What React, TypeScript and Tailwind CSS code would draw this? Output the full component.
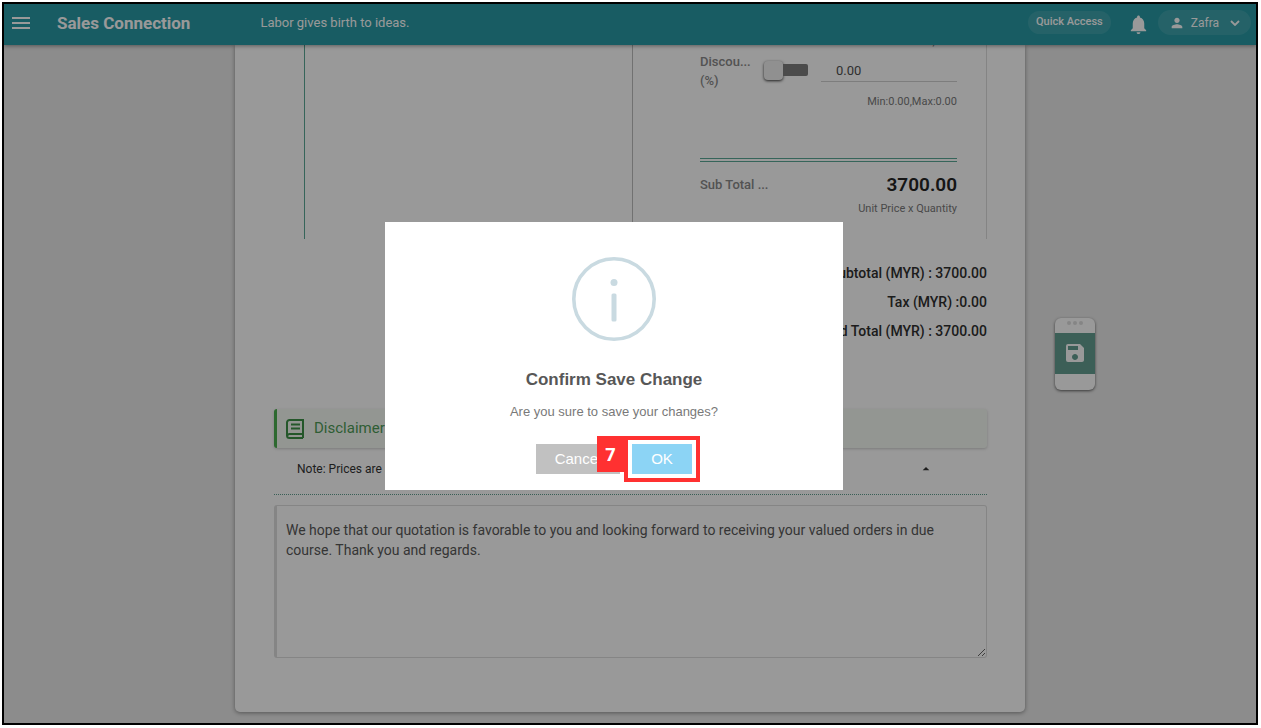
import { MdMenu, MdNotifications, MdPerson, MdSave, MdArrowDropUp } from "react-icons/md";

function Header() {
  return (
    <header className="relative z-10 flex h-[41px] shrink-0 items-center bg-[#289aa5] pr-[5px] pb-1 text-white shadow-[0_1px_4px_rgba(0,0,0,0.4)]">
      <button type="button" aria-label="Open menu" className="ml-[5px]">
        <MdMenu className="size-6" />
      </button>
      <h1 className="ml-6 text-[17px] leading-6 font-bold">Sales Connection</h1>
      <p className="ml-[70px] text-[13px] leading-5">Labor gives birth to ideas.</p>
      <div className="ml-auto flex items-center">
        <button type="button" className="h-[23px] rounded-full bg-white/10 px-2 text-[11px] font-medium">
          Quick Access
        </button>
        <button type="button" aria-label="Notifications" className="mt-[3px] mr-2 ml-4">
          <MdNotifications className="size-[23px]" />
        </button>
        <button type="button" className="flex h-[25px] items-center rounded-full bg-white/10 px-[11px] text-[12px]">
          <MdPerson className="size-4" />
          <span className="ml-[6px]">Zafra</span>
          <svg viewBox="0 0 10 6" className="ml-[11px] w-[10px] fill-none stroke-white stroke-[1.8]" aria-hidden="true">
            <path d="M1 1l4 4 4-4" />
          </svg>
        </button>
      </div>
    </header>
  );
}

function LineItem() {
  return (
    <section className="ml-[30px] grid h-[194px] grid-cols-[327px_1fr] overflow-hidden border-r border-l border-r-[#dcdcdc] border-l-[#5aa896]">
      <div />
      <div className="border-l border-[#bdbdbd] pr-[29px] pl-[67px]">
        <p className="-mt-[10px] text-right text-[11px] leading-[14px] text-[#7a7a7a]">Price, Unit</p>
        <div className="mt-[3px] flex">
          <label htmlFor="discount" className="w-[52px] text-[13px] leading-[19px] font-medium text-[#8a8a8a]">
            <span className="block whitespace-nowrap">Discou...</span>
            (%)
          </label>
          <button
            type="button"
            role="switch"
            aria-checked="false"
            aria-label="Discount"
            className="mt-[8px] ml-3 flex h-[20px] w-[44px] items-center"
          >
            <span className="size-[19px] shrink-0 rounded-[4px] bg-[#f1f1f1] shadow-[0_1px_3px_rgba(0,0,0,0.8)]" />
            <span className="h-3 flex-1 rounded-r-[2px] bg-[#7d7d7d]" />
          </button>
          <input
            id="discount"
            defaultValue="0.00"
            className="mt-2 ml-[13px] h-[22px] w-0 flex-1 border-b border-[#d0d0d0] pl-[15px] text-[13px] text-[#505050]"
          />
        </div>
        <p className="mt-1 text-right text-[11px] leading-4 text-[#7a7a7a]">Min:0.00,Max:0.00</p>
        <div className="mt-12 h-1 border-y border-[#5aa896]" />
        <div className="mt-[11px] flex items-center justify-between">
          <span className="text-[13px] font-medium text-[#8a8a8a]">Sub Total ...</span>
          <strong className="text-[19px] leading-6 font-semibold text-[#262626]">3700.00</strong>
        </div>
        <p className="mt-1 text-right text-[11px] leading-4 text-[#7a7a7a]">Unit Price x Quantity</p>
      </div>
    </section>
  );
}

function Totals() {
  return (
    <div className="mt-5 text-right text-[14px] leading-[29px] font-medium text-[#303030]">
      <p>Subtotal (MYR) : 3700.00</p>
      <p>Tax (MYR) :0.00</p>
      <p>Grand Total (MYR) : 3700.00</p>
    </div>
  );
}

function Disclaimer() {
  return (
    <section className="mt-[63px]">
      <h2 className="flex h-[39px] items-center rounded-[3px] border-l-[3px] border-[#4caf50] bg-[#f6faf4] pl-[9px] text-[15px] text-[#4f9d58] shadow-[0_1px_3px_rgba(0,0,0,0.2)]">
        <svg viewBox="0 0 18 20" className="w-[18px] fill-none stroke-[#3c9146] stroke-2" aria-hidden="true">
          <path d="M17 19H3.500A2.500 2.500 0 0 1 1 16.500V3.500A2.500 2.500 0 0 1 3.500 1H17V19M17 15H3.500A2 2 0 0 0 1.500 16.500M5 5.500h9M5 9.500h9" />
        </svg>
        <span className="ml-[10px]">Disclaimer</span>
      </h2>
      <button
        type="button"
        className="flex h-[47px] w-full items-center justify-between border-b border-dotted border-[#5f9e90] pr-[53px] pb-1 pl-[23px] text-[12px] text-[#333]"
      >
        <span>Note: Prices are subject to change</span>
        <MdArrowDropUp className="size-4" />
      </button>
      <textarea
        aria-label="Disclaimer text"
        className="mt-[10px] block h-[153px] w-full rounded-[3px] border border-l-[3px] border-[#dedede] bg-white px-[9px] py-[14px] text-[14px] leading-5 text-[#595959]"
        defaultValue="We hope that our quotation is favorable to you and looking forward to receiving your valued orders in due course. Thank you and regards."
      />
    </section>
  );
}

function SavePanel() {
  return (
    <aside className="absolute top-[314px] left-1/2 ml-[425px] w-10 overflow-hidden rounded-[6px] bg-white shadow-[0_1px_3px_rgba(0,0,0,0.6)]">
      <div className="flex h-[15px] justify-center gap-[2px] pt-[3px]">
        <i className="size-1 rounded-full bg-[#dedede]" />
        <i className="size-1 rounded-full bg-[#dedede]" />
        <i className="size-1 rounded-full bg-[#dedede]" />
      </div>
      <button type="button" aria-label="Save" className="flex h-[41px] w-full items-center justify-center bg-[#659f92] pb-[2px] text-white">
        <MdSave className="size-6" />
      </button>
      <div className="h-4" />
    </aside>
  );
}

function ConfirmDialog() {
  return (
    <div className="absolute inset-0 z-20 flex items-center justify-center bg-black/40 pr-8 pb-[15px]">
      <div
        role="alertdialog"
        aria-modal="true"
        aria-labelledby="confirm-title"
        className="flex w-[458px] flex-col items-center bg-white pt-[35px] pb-4 font-['Liberation_Sans',sans-serif]"
      >
        <svg viewBox="0 0 84 84" className="size-[84px]" aria-hidden="true">
          <circle cx="42" cy="42" r="40.200" fill="none" stroke="#c9dae1" strokeWidth="3.600" />
          <circle cx="42" cy="25.500" r="3.500" fill="#c9dae1" />
          <rect x="39.500" y="36.500" width="5" height="28" rx="1.500" fill="#c9dae1" />
        </svg>
        <h2 id="confirm-title" className="mt-[29px] text-[17px] leading-5 font-bold text-[#575757]">
          Confirm Save Change
        </h2>
        <p className="mt-3 text-[13px] leading-5 text-[#797979]">Are you sure to save your changes?</p>
        <div className="mt-[22px] flex gap-3">
          <button type="button" className="h-[30px] w-[84px] bg-[#c1c1c1] text-[15px] text-white">
            Cancel
          </button>
          <div className="relative">
            <button type="button" className="h-[30px] w-[60px] bg-[#8cd4f5] text-[15px] text-white">
              OK
            </button>
            <div className="pointer-events-none absolute -inset-2 border-4 border-[#ff3131]" />
            <span className="absolute -top-2 right-[68px] flex h-9 w-[27px] items-center justify-center bg-[#ff3131] font-['Open_Sans',sans-serif] text-[18px] font-bold text-white">
              7
            </span>
          </div>
        </div>
      </div>
    </div>
  );
}

export default function App() {
  return (
    <div className="h-screen bg-white pt-[2px] pr-[3px] pb-[3px] pl-[2px] font-[Roboto,sans-serif]">
      <div className="relative flex h-full flex-col overflow-hidden border-2 border-black bg-[#e9e9e9]">
        <Header />
        <main className="mx-auto mb-[11px] w-full max-w-[790px] flex-1 rounded-b-[5px] bg-white pr-[38px] pl-[39px] shadow-[0_1px_4px_rgba(0,0,0,0.4)]">
          <LineItem />
          <Totals />
          <Disclaimer />
        </main>
        <SavePanel />
        <ConfirmDialog />
      </div>
    </div>
  );
}
